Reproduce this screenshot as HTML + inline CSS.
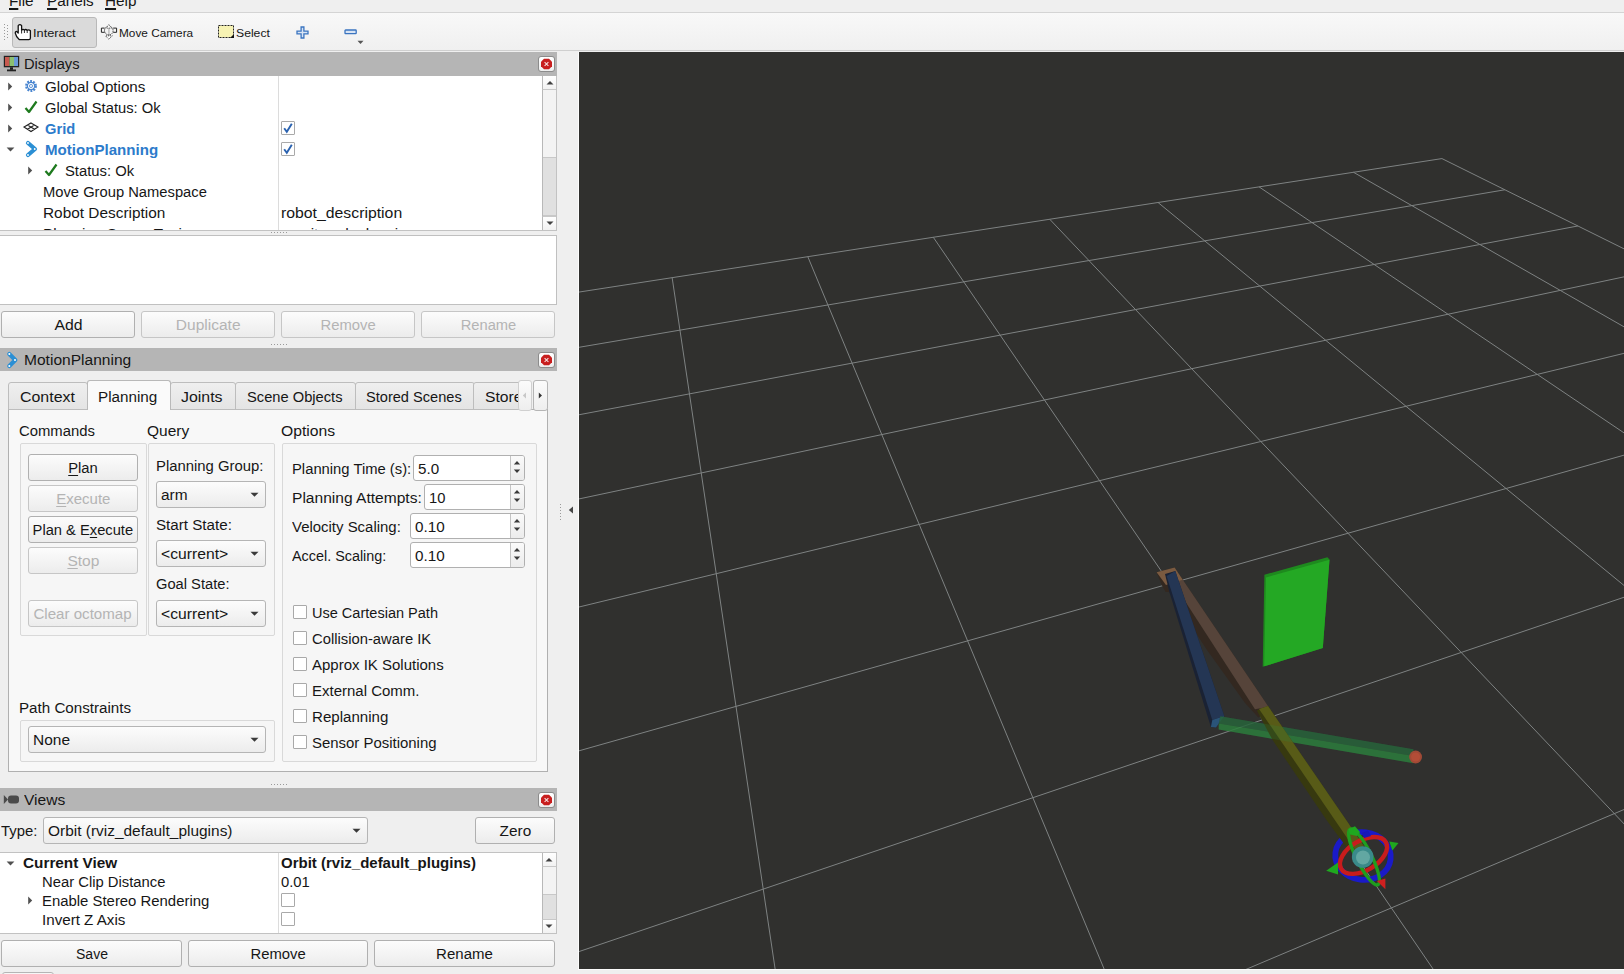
<!DOCTYPE html><html><head><meta charset="utf-8"><style>
html,body{margin:0;padding:0;}
body{width:1624px;height:974px;overflow:hidden;position:relative;background:#efefef;font-family:"Liberation Sans",sans-serif;}
.t{position:absolute;white-space:nowrap;transform-origin:0 0;}
.tc{position:absolute;white-space:nowrap;text-align:center;}
.r{position:absolute;}
svg{position:absolute;overflow:visible;}
.clip{position:absolute;overflow:hidden;}
</style></head><body>
<div class="r" style="left:0px;top:0px;width:1624px;height:12px;background:#efefef;"></div>
<div class="r" style="left:0px;top:12px;width:1624px;height:1px;background:#d4d4d4;"></div>
<div class="t" style="left:8.50px;top:-5.55px;font-size:14.0px;line-height:14.0px;font-weight:400;color:#161616;transform:scaleX(1.09);"><span style="text-decoration:underline;text-decoration-thickness:2px;text-underline-offset:2px">F</span>ile</div>
<div class="t" style="left:46.70px;top:-5.55px;font-size:14.0px;line-height:14.0px;font-weight:400;color:#161616;transform:scaleX(1.09);"><span style="text-decoration:underline;text-decoration-thickness:2px;text-underline-offset:2px">P</span>anels</div>
<div class="t" style="left:104.60px;top:-5.55px;font-size:14.0px;line-height:14.0px;font-weight:400;color:#161616;transform:scaleX(1.09);"><span style="text-decoration:underline;text-decoration-thickness:2px;text-underline-offset:2px">H</span>elp</div>
<div class="r" style="left:0px;top:13px;width:1624px;height:37px;background:linear-gradient(#f8f8f8,#f0f0f0);"></div>
<div class="r" style="left:0px;top:50px;width:1624px;height:1px;background:#cfcfcf;"></div>
<div class="r" style="left:4px;top:24px;width:1px;height:1px;background:#9a9a9a;"></div>
<div class="r" style="left:4px;top:27px;width:1px;height:1px;background:#9a9a9a;"></div>
<div class="r" style="left:4px;top:30px;width:1px;height:1px;background:#9a9a9a;"></div>
<div class="r" style="left:4px;top:33px;width:1px;height:1px;background:#9a9a9a;"></div>
<div class="r" style="left:4px;top:36px;width:1px;height:1px;background:#9a9a9a;"></div>
<div class="r" style="left:4px;top:39px;width:1px;height:1px;background:#9a9a9a;"></div>
<div class="r" style="left:7px;top:25px;width:1px;height:1px;background:#9a9a9a;"></div>
<div class="r" style="left:7px;top:28px;width:1px;height:1px;background:#9a9a9a;"></div>
<div class="r" style="left:7px;top:31px;width:1px;height:1px;background:#9a9a9a;"></div>
<div class="r" style="left:7px;top:34px;width:1px;height:1px;background:#9a9a9a;"></div>
<div class="r" style="left:7px;top:37px;width:1px;height:1px;background:#9a9a9a;"></div>
<div class="r" style="left:12px;top:17px;width:85px;height:31px;border:1px solid #b9b9b9;border-radius:3px;background:#dadada;box-sizing:border-box;"></div>
<svg style="left:14px;top:23px;" width="18" height="18" viewBox="0 0 18 18"><path d="M4.2 10 L4.2 2.6 Q5.9 0.6 7.6 2.6 L7.6 7.2 Q9 5.6 10.4 7 Q11.8 5.8 13.2 7.3 Q14.9 6.2 16.4 7.8 L16.4 15 Q16.4 16.6 14.8 16.6 L5.2 16.6 Q2 13.8 1.3 10.2 Q1.2 8.4 2.6 8.4 Z" fill="#fff" stroke="#111" stroke-width="1.3" stroke-linejoin="round"/><path d="M7.6 7.2 L7.6 10.5 M10.4 7 L10.4 10 M13.2 7.3 L13.2 10" stroke="#111" stroke-width="0.9"/></svg>
<div class="t" style="left:32.90px;top:27.96px;font-size:10.8px;line-height:10.8px;font-weight:400;color:#161616;transform:scaleX(1.1828);">Interact</div>
<svg style="left:98px;top:20px;" width="24" height="24" viewBox="0 0 24 24"><rect x="10" y="8" width="1.8" height="8" fill="#c8c8c8"/><path d="M3.4 8.1 L6.6 8.1 M3.4 12.3 L6.6 12.3 M3.4 8.1 L3.4 12.3 M15.2 8.1 L18.6 8.1 M15.2 12.3 L18.6 12.3 M18.6 8.1 L18.6 12.3" stroke="#222" stroke-width="1"/><circle cx="10.8" cy="10.6" r="4.3" fill="none" stroke="#333" stroke-width="1" stroke-dasharray="1.3,0.9"/><path d="M10.8 4.7 L13.8 8.1 L7.9 8.1 Z M10.8 19.2 L14.3 15.8 L7.4 15.8 Z" fill="#fff" stroke="#444" stroke-width="0.9" stroke-dasharray="1.2,0.8"/></svg>
<div class="t" style="left:118.50px;top:27.96px;font-size:10.8px;line-height:10.8px;font-weight:400;color:#161616;transform:scaleX(1.0942);">Move Camera</div>
<svg style="left:217px;top:24px;" width="18" height="15" viewBox="0 0 18 15"><rect x="1.5" y="1.5" width="15" height="12" fill="#f7f3b4" stroke="#222" stroke-width="1" stroke-dasharray="2,1"/><path d="M17 10 L17 14 L13 14Z" fill="#111"/></svg>
<div class="t" style="left:235.50px;top:27.96px;font-size:10.8px;line-height:10.8px;font-weight:400;color:#161616;transform:scaleX(1.1294);">Select</div>
<svg style="left:295.5px;top:25.5px;" width="13" height="13" viewBox="0 0 13 13"><path d="M5.1 1 L7.9 1 L7.9 5.1 L12 5.1 L12 7.9 L7.9 7.9 L7.9 12 L5.1 12 L5.1 7.9 L1 7.9 L1 5.1 L5.1 5.1 Z" fill="#d8e4f4" stroke="#3a74c0" stroke-width="1.3"/></svg>
<svg style="left:343.5px;top:29px;" width="14" height="7" viewBox="0 0 14 7"><rect x="1" y="1" width="11.2" height="3.6" rx="0.6" fill="#d8e4f4" stroke="#3a74c0" stroke-width="1.3"/></svg>
<svg style="left:357px;top:40px;" width="8" height="5" viewBox="0 0 8 5"><path d="M0.5 0.8 L6.5 0.8 L3.5 4Z" fill="#555"/></svg>
<div class="r" style="left:0px;top:52px;width:557px;height:24px;background:#b5b5b5;"></div>
<div class="t" style="left:24.30px;top:57.25px;font-size:14.0px;line-height:14.0px;font-weight:400;color:#161616;transform:scaleX(1.049);">Displays</div>
<svg style="left:3px;top:55px" width="17" height="18" viewBox="0 0 17 18"><rect x="0.8" y="0.8" width="15.4" height="11.5" fill="#222" /><rect x="2" y="2" width="4.5" height="9" fill="#c85a50"/><rect x="6.5" y="2" width="4.5" height="9" fill="#8cc070"/><rect x="11" y="2" width="4" height="9" fill="#6a9ad8"/><rect x="7" y="12.3" width="3" height="2.5" fill="#222"/><rect x="4" y="14.5" width="9" height="1.8" fill="#222"/></svg>
<div class="r" style="left:538px;top:55.5px;width:17px;height:16.0px;border:1px solid #8c8c8c;border-radius:3px;background:linear-gradient(#ffffff,#eeeeee);box-sizing:border-box;"></div>
<svg style="left:540px;top:57.5px;" width="13" height="12" viewBox="0 0 13 12"><polygon points="4,0.8 9,0.8 12,3.8 12,8.2 9,11.2 4,11.2 1,8.2 1,3.8" fill="#c81e1e"/><path d="M4.6 4.1 L8.4 7.9 M8.4 4.1 L4.6 7.9" stroke="#f4dede" stroke-width="1.1"/></svg>
<div class="r" style="left:0px;top:76px;width:557px;height:155px;background:#fff;"></div>
<div class="r" style="left:0px;top:230px;width:557px;height:1px;background:#c2c2c2;"></div>
<div class="r" style="left:278px;top:76px;width:1px;height:154px;background:#dcdcdc;"></div>
<div class="r" style="left:542px;top:76px;width:15px;height:154px;border-left:1px solid #b8b8b8;background:#f3f3f3;box-sizing:border-box;"></div>
<div class="r" style="left:542px;top:76px;width:15px;height:14px;border-left:1px solid #b8b8b8;border-bottom:1px solid #c8c8c8;background:linear-gradient(#ffffff,#f2f2f2);box-sizing:border-box;"></div>
<svg style="left:545.5px;top:80px;" width="8" height="6" viewBox="0 0 8 6"><path d="M0.5 4.5 L7.5 4.5 L4 1Z" fill="#404040"/></svg>
<div class="r" style="left:542px;top:216px;width:15px;height:14px;border-left:1px solid #b8b8b8;border-top:1px solid #c8c8c8;background:linear-gradient(#ffffff,#f2f2f2);box-sizing:border-box;"></div>
<svg style="left:545.5px;top:220px;" width="8" height="6" viewBox="0 0 8 6"><path d="M0.5 1.5 L7.5 1.5 L4 5Z" fill="#404040"/></svg>
<div class="r" style="left:543px;top:157px;width:14px;height:59px;background:#e0e0e0;border-top:1px solid #c8c8c8;border-bottom:1px solid #c8c8c8;box-sizing:border-box;"></div>
<div class="r" style="left:556px;top:76px;width:1px;height:155px;background:#c2c2c2;"></div>
<svg style="left:7px;top:81.8px;" width="7" height="9" viewBox="0 0 7 9"><path d="M1.2 0.6 L5.2 4.5 L1.2 8.4Z" fill="#505050"/></svg>
<svg style="left:24px;top:79px;" width="14" height="14" viewBox="0 0 14 14"><g transform="translate(7,7)"><circle r="4.6" fill="none" stroke="#4a86d0" stroke-width="2.6" stroke-dasharray="1.8,1.1"/><circle r="3.6" fill="none" stroke="#4a86d0" stroke-width="1.2"/><circle r="1.6" fill="#e8f0fa" stroke="#4a86d0" stroke-width="0.8"/></g></svg>
<div class="t" style="left:44.90px;top:79.85px;font-size:14.0px;line-height:14.0px;font-weight:400;color:#161616;transform:scaleX(1.0841);">Global Options</div>
<svg style="left:7px;top:102.85px;" width="7" height="9" viewBox="0 0 7 9"><path d="M1.2 0.6 L5.2 4.5 L1.2 8.4Z" fill="#505050"/></svg>
<svg style="left:24px;top:100px;" width="14" height="14" viewBox="0 0 14 14"><path d="M1.5 8 L5 12 L12.5 1.5" fill="none" stroke="#1e7a1e" stroke-width="2.2" stroke-linejoin="round"/></svg>
<div class="t" style="left:44.90px;top:100.90px;font-size:14.0px;line-height:14.0px;font-weight:400;color:#161616;transform:scaleX(1.0536);">Global Status: Ok</div>
<svg style="left:7px;top:123.9px;" width="7" height="9" viewBox="0 0 7 9"><path d="M1.2 0.6 L5.2 4.5 L1.2 8.4Z" fill="#505050"/></svg>
<svg style="left:23px;top:122px;" width="16" height="11" viewBox="0 0 16 11"><path d="M8 1 L15 5 L8 9.5 L1 5Z M4.5 3 L11.5 7.3 M11.5 3 L4.5 7.3" fill="none" stroke="#222" stroke-width="1.1"/></svg>
<div class="t" style="left:44.90px;top:121.95px;font-size:14.0px;line-height:14.0px;font-weight:700;color:#2c7bcb;transform:scaleX(1.0493);">Grid</div>
<div class="r" style="left:281px;top:121px;width:14px;height:14px;border:1px solid #a9a9a9;border-radius:1px;background:#fff;box-sizing:border-box;"></div>
<svg style="left:281px;top:121px;" width="14" height="14" viewBox="0 0 14 14"><path d="M3.2 7.2 L5.8 10.8 L10.8 2.8" fill="none" stroke="#2a62b0" stroke-width="1.9"/></svg>
<svg style="left:5.5px;top:146.45px;" width="9" height="7" viewBox="0 0 9 7"><path d="M0.6 1.6 L8.4 1.6 L4.5 5.4Z" fill="#505050"/></svg>
<svg style="left:20px;top:138px;" width="20" height="20" viewBox="0 0 20 20"><path d="M8 5 L15 11 L8 17" fill="none" stroke="#2b8fd4" stroke-width="4.2" stroke-linecap="round" stroke-linejoin="round"/><circle cx="8" cy="5" r="0.9" fill="#fff"/><circle cx="14.7" cy="11" r="0.9" fill="#fff"/><circle cx="8" cy="17" r="0.9" fill="#fff"/></svg>
<div class="t" style="left:44.90px;top:143.00px;font-size:14.0px;line-height:14.0px;font-weight:700;color:#2c7bcb;transform:scaleX(1.0773);">MotionPlanning</div>
<div class="r" style="left:281px;top:142px;width:14px;height:14px;border:1px solid #a9a9a9;border-radius:1px;background:#fff;box-sizing:border-box;"></div>
<svg style="left:281px;top:142px;" width="14" height="14" viewBox="0 0 14 14"><path d="M3.2 7.2 L5.8 10.8 L10.8 2.8" fill="none" stroke="#2a62b0" stroke-width="1.9"/></svg>
<svg style="left:27px;top:166.0px;" width="7" height="9" viewBox="0 0 7 9"><path d="M1.2 0.6 L5.2 4.5 L1.2 8.4Z" fill="#505050"/></svg>
<svg style="left:44px;top:163px;" width="14" height="14" viewBox="0 0 14 14"><path d="M1.5 8 L5 12 L12.5 1.5" fill="none" stroke="#1e7a1e" stroke-width="2.2" stroke-linejoin="round"/></svg>
<div class="t" style="left:64.50px;top:164.05px;font-size:14.0px;line-height:14.0px;font-weight:400;color:#161616;transform:scaleX(1.0572);">Status: Ok</div>
<div class="t" style="left:42.70px;top:185.10px;font-size:14.0px;line-height:14.0px;font-weight:400;color:#161616;transform:scaleX(1.0531);">Move Group Namespace</div>
<div class="t" style="left:42.70px;top:206.15px;font-size:14.0px;line-height:14.0px;font-weight:400;color:#161616;transform:scaleX(1.099);">Robot Description</div>
<div class="t" style="left:280.50px;top:206.15px;font-size:14.0px;line-height:14.0px;font-weight:400;color:#161616;transform:scaleX(1.1284);">robot_description</div>
<div class="clip" style="left:0;top:225px;width:540px;height:5px;">
<div class="t" style="left:42.70px;top:2.20px;font-size:14.0px;line-height:14.0px;font-weight:400;color:#161616;transform:scaleX(1.09);">Planning Scene Topic</div>
<div class="t" style="left:280.50px;top:2.20px;font-size:14.0px;line-height:14.0px;font-weight:400;color:#161616;transform:scaleX(1.09);">monitored_planning_scene</div>
</div>
<div class="r" style="left:271px;top:232px;width:1px;height:1px;background:#9a9a9a;"></div>
<div class="r" style="left:274px;top:232px;width:1px;height:1px;background:#9a9a9a;"></div>
<div class="r" style="left:277px;top:232px;width:1px;height:1px;background:#9a9a9a;"></div>
<div class="r" style="left:280px;top:232px;width:1px;height:1px;background:#9a9a9a;"></div>
<div class="r" style="left:283px;top:232px;width:1px;height:1px;background:#9a9a9a;"></div>
<div class="r" style="left:286px;top:232px;width:1px;height:1px;background:#9a9a9a;"></div>
<div class="r" style="left:0px;top:235px;width:557px;height:70px;background:#fff;border:1px solid #c0c0c0;border-left:none;box-sizing:border-box;"></div>
<div class="r" style="left:1px;top:311px;width:134px;height:27px;border:1px solid #b0b0b0;border-radius:3px;background:linear-gradient(#fcfcfc,#ececec);box-sizing:border-box;"></div>
<div class="tc" style="left:1px;width:134px;top:318.15px;font-size:14.0px;line-height:14.0px;color:#161616;"><span style="display:inline-block;transform:scaleX(1.1275)">Add</span></div>
<div class="r" style="left:141px;top:311px;width:134px;height:27px;border:1px solid #c6c6c6;border-radius:3px;background:linear-gradient(#fcfcfc,#ececec);box-sizing:border-box;"></div>
<div class="tc" style="left:141px;width:134px;top:318.15px;font-size:14.0px;line-height:14.0px;color:#b4b4b4;"><span style="display:inline-block;transform:scaleX(1.1084)">Duplicate</span></div>
<div class="r" style="left:281px;top:311px;width:134px;height:27px;border:1px solid #c6c6c6;border-radius:3px;background:linear-gradient(#fcfcfc,#ececec);box-sizing:border-box;"></div>
<div class="tc" style="left:281px;width:134px;top:318.15px;font-size:14.0px;line-height:14.0px;color:#b4b4b4;"><span style="display:inline-block;transform:scaleX(1.0587)">Remove</span></div>
<div class="r" style="left:421px;top:311px;width:134px;height:27px;border:1px solid #c6c6c6;border-radius:3px;background:linear-gradient(#fcfcfc,#ececec);box-sizing:border-box;"></div>
<div class="tc" style="left:421px;width:134px;top:318.15px;font-size:14.0px;line-height:14.0px;color:#b4b4b4;"><span style="display:inline-block;transform:scaleX(1.0506)">Rename</span></div>
<div class="r" style="left:271px;top:344px;width:1px;height:1px;background:#9a9a9a;"></div>
<div class="r" style="left:274px;top:344px;width:1px;height:1px;background:#9a9a9a;"></div>
<div class="r" style="left:277px;top:344px;width:1px;height:1px;background:#9a9a9a;"></div>
<div class="r" style="left:280px;top:344px;width:1px;height:1px;background:#9a9a9a;"></div>
<div class="r" style="left:283px;top:344px;width:1px;height:1px;background:#9a9a9a;"></div>
<div class="r" style="left:286px;top:344px;width:1px;height:1px;background:#9a9a9a;"></div>
<div class="r" style="left:0px;top:348px;width:557px;height:23px;background:#b5b5b5;"></div>
<div class="t" style="left:24.30px;top:352.95px;font-size:14.0px;line-height:14.0px;font-weight:400;color:#161616;transform:scaleX(1.1107);">MotionPlanning</div>
<svg style="left:0px;top:340px" width="30" height="35" viewBox="0 340 30 35"><path d="M9.3 354 L15.3 360 L9.3 366" fill="none" stroke="#2b8fd4" stroke-width="4.2" stroke-linecap="round" stroke-linejoin="round"/><circle cx="9.3" cy="354" r="1" fill="#fff"/><circle cx="15" cy="360" r="1" fill="#fff"/><circle cx="9.3" cy="366" r="1" fill="#fff"/></svg>
<div class="r" style="left:538px;top:351.5px;width:17px;height:16.0px;border:1px solid #8c8c8c;border-radius:3px;background:linear-gradient(#ffffff,#eeeeee);box-sizing:border-box;"></div>
<svg style="left:540px;top:353.5px;" width="13" height="12" viewBox="0 0 13 12"><polygon points="4,0.8 9,0.8 12,3.8 12,8.2 9,11.2 4,11.2 1,8.2 1,3.8" fill="#c81e1e"/><path d="M4.6 4.1 L8.4 7.9 M8.4 4.1 L4.6 7.9" stroke="#f4dede" stroke-width="1.1"/></svg>
<div class="r" style="left:8px;top:409px;width:540px;height:363px;background:#f8f8f8;border:1px solid #b0b0b0;border-radius:0;box-sizing:border-box;"></div>
<div class="r" style="left:8px;top:382px;width:80px;height:28px;background:linear-gradient(#efefef,#e4e4e4);border:1px solid #bdbdbd;border-radius:3px 3px 0 0;box-sizing:border-box;"></div>
<div class="t" style="left:19.80px;top:390.15px;font-size:14.0px;line-height:14.0px;font-weight:400;color:#161616;transform:scaleX(1.1378);">Context</div>
<div class="r" style="left:170px;top:382px;width:66px;height:28px;background:linear-gradient(#efefef,#e4e4e4);border:1px solid #bdbdbd;border-radius:3px 3px 0 0;box-sizing:border-box;"></div>
<div class="t" style="left:181.40px;top:390.15px;font-size:14.0px;line-height:14.0px;font-weight:400;color:#161616;transform:scaleX(1.1346);">Joints</div>
<div class="r" style="left:235px;top:382px;width:121px;height:28px;background:linear-gradient(#efefef,#e4e4e4);border:1px solid #bdbdbd;border-radius:3px 3px 0 0;box-sizing:border-box;"></div>
<div class="t" style="left:246.50px;top:390.15px;font-size:14.0px;line-height:14.0px;font-weight:400;color:#161616;transform:scaleX(1.0487);">Scene Objects</div>
<div class="r" style="left:355px;top:382px;width:120px;height:28px;background:linear-gradient(#efefef,#e4e4e4);border:1px solid #bdbdbd;border-radius:3px 3px 0 0;box-sizing:border-box;"></div>
<div class="t" style="left:365.50px;top:390.15px;font-size:14.0px;line-height:14.0px;font-weight:400;color:#161616;transform:scaleX(1.042);">Stored Scenes</div>
<div class="clip" style="left:473px;top:380px;width:46px;height:30px;">
<div class="r" style="left:0px;top:2px;width:60px;height:28px;background:linear-gradient(#efefef,#e4e4e4);border:1px solid #bdbdbd;border-radius:3px 3px 0 0;box-sizing:border-box;"></div>
<div class="t" style="left:11.70px;top:10.15px;font-size:14.0px;line-height:14.0px;font-weight:400;color:#161616;transform:scaleX(1.12);">Stored States</div>
</div>
<div class="r" style="left:87px;top:380px;width:84px;height:30px;background:#fafafa;border:1px solid #b9b9b9;border-bottom:none;border-radius:3px 3px 0 0;box-sizing:border-box;"></div>
<div class="t" style="left:98.40px;top:389.55px;font-size:14.0px;line-height:14.0px;font-weight:400;color:#161616;transform:scaleX(1.0881);">Planning</div>
<div class="r" style="left:518px;top:380px;width:14px;height:31px;border:1px solid #d0d0d0;border-radius:3px;background:linear-gradient(#fbfbfb,#eeeeee);box-sizing:border-box;"></div>
<svg style="left:522px;top:392px;" width="5" height="7" viewBox="0 0 5 7"><path d="M4 0.5 L0.8 3.5 L4 6.5Z" fill="#c8c8c8"/></svg>
<div class="r" style="left:533px;top:380px;width:15px;height:31px;border:1px solid #b5b5b5;border-radius:3px;background:linear-gradient(#fbfbfb,#eeeeee);box-sizing:border-box;"></div>
<svg style="left:538px;top:392px;" width="5" height="7" viewBox="0 0 5 7"><path d="M0.8 0.5 L4 3.5 L0.8 6.5Z" fill="#333"/></svg>
<div class="t" style="left:18.70px;top:424.05px;font-size:14.0px;line-height:14.0px;font-weight:400;color:#161616;transform:scaleX(1.0601);">Commands</div>
<div class="t" style="left:146.90px;top:424.05px;font-size:14.0px;line-height:14.0px;font-weight:400;color:#161616;transform:scaleX(1.1069);">Query</div>
<div class="t" style="left:281.00px;top:424.25px;font-size:14.0px;line-height:14.0px;font-weight:400;color:#161616;transform:scaleX(1.1212);">Options</div>
<div class="r" style="left:20px;top:443px;width:127px;height:193px;border:1px solid #d9d9d9;border-radius:2px;background:#f6f6f6;box-sizing:border-box;"></div>
<div class="r" style="left:148px;top:443px;width:127px;height:193px;border:1px solid #d9d9d9;border-radius:2px;background:#f6f6f6;box-sizing:border-box;"></div>
<div class="r" style="left:282px;top:443px;width:255px;height:319px;border:1px solid #d9d9d9;border-radius:2px;background:#f6f6f6;box-sizing:border-box;"></div>
<div class="r" style="left:28px;top:454px;width:110px;height:27px;border:1px solid #b0b0b0;border-radius:3px;background:linear-gradient(#fcfcfc,#ececec);box-sizing:border-box;"></div>
<div class="tc" style="left:28px;width:110px;top:461.15px;font-size:14.0px;line-height:14.0px;color:#161616;"><span style="display:inline-block;transform:scaleX(1.056)"><span style="text-decoration:underline;text-decoration-thickness:1px;text-underline-offset:2px">P</span>lan</span></div>
<div class="r" style="left:28px;top:485px;width:110px;height:27px;border:1px solid #c6c6c6;border-radius:3px;background:linear-gradient(#fcfcfc,#ececec);box-sizing:border-box;"></div>
<div class="tc" style="left:28px;width:110px;top:492.35px;font-size:14.0px;line-height:14.0px;color:#b4b4b4;"><span style="display:inline-block;transform:scaleX(1.0713)"><span style="text-decoration:underline;text-decoration-thickness:1px;text-underline-offset:2px">E</span>xecute</span></div>
<div class="r" style="left:28px;top:516px;width:110px;height:27px;border:1px solid #b0b0b0;border-radius:3px;background:linear-gradient(#fcfcfc,#ececec);box-sizing:border-box;"></div>
<div class="tc" style="left:28px;width:110px;top:523.15px;font-size:14.0px;line-height:14.0px;color:#161616;"><span style="display:inline-block;transform:scaleX(1.0498)">Plan &amp; E<span style="text-decoration:underline;text-decoration-thickness:1px;text-underline-offset:2px">x</span>ecute</span></div>
<div class="r" style="left:28px;top:547px;width:110px;height:27px;border:1px solid #c6c6c6;border-radius:3px;background:linear-gradient(#fcfcfc,#ececec);box-sizing:border-box;"></div>
<div class="tc" style="left:28px;width:110px;top:554.05px;font-size:14.0px;line-height:14.0px;color:#b4b4b4;"><span style="display:inline-block;transform:scaleX(1.1106)"><span style="text-decoration:underline;text-decoration-thickness:1px;text-underline-offset:2px">S</span>top</span></div>
<div class="r" style="left:28px;top:600px;width:110px;height:27px;border:1px solid #c6c6c6;border-radius:3px;background:linear-gradient(#fcfcfc,#ececec);box-sizing:border-box;"></div>
<div class="tc" style="left:28px;width:110px;top:607.05px;font-size:14.0px;line-height:14.0px;color:#b4b4b4;"><span style="display:inline-block;transform:scaleX(1.0786)">Clear octomap</span></div>
<div class="t" style="left:155.70px;top:458.75px;font-size:14.0px;line-height:14.0px;font-weight:400;color:#161616;transform:scaleX(1.0624);">Planning Group:</div>
<div class="r" style="left:156px;top:481px;width:110px;height:27px;border:1px solid #b5b5b5;border-radius:3px;background:linear-gradient(#fcfcfc,#ececec);box-sizing:border-box;"></div>
<div class="t" style="left:160.60px;top:488.25px;font-size:14.0px;line-height:14.0px;font-weight:400;color:#161616;transform:scaleX(1.1026);">arm</div>
<svg style="left:250px;top:491.5px;" width="9" height="6" viewBox="0 0 9 6"><path d="M0.5 0.8 L8.5 0.8 L4.5 4.8Z" fill="#3a3a3a"/></svg>
<div class="t" style="left:155.70px;top:517.85px;font-size:14.0px;line-height:14.0px;font-weight:400;color:#161616;transform:scaleX(1.0836);">Start State:</div>
<div class="r" style="left:156px;top:540px;width:110px;height:27px;border:1px solid #b5b5b5;border-radius:3px;background:linear-gradient(#fcfcfc,#ececec);box-sizing:border-box;"></div>
<div class="t" style="left:160.60px;top:547.35px;font-size:14.0px;line-height:14.0px;font-weight:400;color:#161616;transform:scaleX(1.1212);">&lt;current&gt;</div>
<svg style="left:250px;top:550.5px;" width="9" height="6" viewBox="0 0 9 6"><path d="M0.5 0.8 L8.5 0.8 L4.5 4.8Z" fill="#3a3a3a"/></svg>
<div class="t" style="left:155.70px;top:577.35px;font-size:14.0px;line-height:14.0px;font-weight:400;color:#161616;transform:scaleX(1.0493);">Goal State:</div>
<div class="r" style="left:156px;top:600px;width:110px;height:27px;border:1px solid #b5b5b5;border-radius:3px;background:linear-gradient(#fcfcfc,#ececec);box-sizing:border-box;"></div>
<div class="t" style="left:160.60px;top:607.05px;font-size:14.0px;line-height:14.0px;font-weight:400;color:#161616;transform:scaleX(1.1212);">&lt;current&gt;</div>
<svg style="left:250px;top:610.5px;" width="9" height="6" viewBox="0 0 9 6"><path d="M0.5 0.8 L8.5 0.8 L4.5 4.8Z" fill="#3a3a3a"/></svg>
<div class="t" style="left:292.40px;top:462.35px;font-size:14.0px;line-height:14.0px;font-weight:400;color:#161616;transform:scaleX(1.0565);">Planning Time (s):</div>
<div class="r" style="left:413px;top:455px;width:112px;height:26px;border:1px solid #b0b0b0;border-radius:3px;background:#fff;box-sizing:border-box;"></div>
<div class="r" style="left:510px;top:456px;width:14px;height:24px;border-left:1px solid #c4c4c4;background:linear-gradient(#fafafa,#ececec);box-sizing:border-box;border-radius:0 2px 2px 0;"></div>
<div class="t" style="left:417.60px;top:462.35px;font-size:14.0px;line-height:14.0px;font-weight:400;color:#161616;transform:scaleX(1.0838);">5.0</div>
<svg style="left:513px;top:460px;" width="8" height="15" viewBox="0 0 8 15"><path d="M0.8 4.5 L4 1 L7.2 4.5Z M0.8 9.5 L7.2 9.5 L4 13Z" fill="#3a3a3a"/></svg>
<div class="t" style="left:292.40px;top:491.15px;font-size:14.0px;line-height:14.0px;font-weight:400;color:#161616;transform:scaleX(1.1118);">Planning Attempts:</div>
<div class="r" style="left:424px;top:484px;width:101px;height:26px;border:1px solid #b0b0b0;border-radius:3px;background:#fff;box-sizing:border-box;"></div>
<div class="r" style="left:510px;top:485px;width:14px;height:24px;border-left:1px solid #c4c4c4;background:linear-gradient(#fafafa,#ececec);box-sizing:border-box;border-radius:0 2px 2px 0;"></div>
<div class="t" style="left:429.40px;top:491.15px;font-size:14.0px;line-height:14.0px;font-weight:400;color:#161616;transform:scaleX(1.0528);">10</div>
<svg style="left:513px;top:489px;" width="8" height="15" viewBox="0 0 8 15"><path d="M0.8 4.5 L4 1 L7.2 4.5Z M0.8 9.5 L7.2 9.5 L4 13Z" fill="#3a3a3a"/></svg>
<div class="t" style="left:292.40px;top:520.15px;font-size:14.0px;line-height:14.0px;font-weight:400;color:#161616;transform:scaleX(1.0672);">Velocity Scaling:</div>
<div class="r" style="left:410px;top:513px;width:115px;height:26px;border:1px solid #b0b0b0;border-radius:3px;background:#fff;box-sizing:border-box;"></div>
<div class="r" style="left:510px;top:514px;width:14px;height:24px;border-left:1px solid #c4c4c4;background:linear-gradient(#fafafa,#ececec);box-sizing:border-box;border-radius:0 2px 2px 0;"></div>
<div class="t" style="left:414.50px;top:520.15px;font-size:14.0px;line-height:14.0px;font-weight:400;color:#161616;transform:scaleX(1.0899);">0.10</div>
<svg style="left:513px;top:518px;" width="8" height="15" viewBox="0 0 8 15"><path d="M0.8 4.5 L4 1 L7.2 4.5Z M0.8 9.5 L7.2 9.5 L4 13Z" fill="#3a3a3a"/></svg>
<div class="t" style="left:292.40px;top:549.15px;font-size:14.0px;line-height:14.0px;font-weight:400;color:#161616;transform:scaleX(1.0269);">Accel. Scaling:</div>
<div class="r" style="left:410px;top:542px;width:115px;height:26px;border:1px solid #b0b0b0;border-radius:3px;background:#fff;box-sizing:border-box;"></div>
<div class="r" style="left:510px;top:543px;width:14px;height:24px;border-left:1px solid #c4c4c4;background:linear-gradient(#fafafa,#ececec);box-sizing:border-box;border-radius:0 2px 2px 0;"></div>
<div class="t" style="left:414.50px;top:549.15px;font-size:14.0px;line-height:14.0px;font-weight:400;color:#161616;transform:scaleX(1.0899);">0.10</div>
<svg style="left:513px;top:547px;" width="8" height="15" viewBox="0 0 8 15"><path d="M0.8 4.5 L4 1 L7.2 4.5Z M0.8 9.5 L7.2 9.5 L4 13Z" fill="#3a3a3a"/></svg>
<div class="r" style="left:293px;top:605.3px;width:14px;height:14.0px;border:1px solid #a9a9a9;border-radius:1px;background:#fff;box-sizing:border-box;"></div>
<div class="t" style="left:311.80px;top:606.35px;font-size:14.0px;line-height:14.0px;font-weight:400;color:#161616;transform:scaleX(1.0378);">Use Cartesian Path</div>
<div class="r" style="left:293px;top:631.3199999999999px;width:14px;height:14.0px;border:1px solid #a9a9a9;border-radius:1px;background:#fff;box-sizing:border-box;"></div>
<div class="t" style="left:311.80px;top:632.37px;font-size:14.0px;line-height:14.0px;font-weight:400;color:#161616;transform:scaleX(1.0565);">Collision-aware IK</div>
<div class="r" style="left:293px;top:657.3399999999999px;width:14px;height:14.0px;border:1px solid #a9a9a9;border-radius:1px;background:#fff;box-sizing:border-box;"></div>
<div class="t" style="left:311.80px;top:658.39px;font-size:14.0px;line-height:14.0px;font-weight:400;color:#161616;transform:scaleX(1.071);">Approx IK Solutions</div>
<div class="r" style="left:293px;top:683.3599999999999px;width:14px;height:14.0px;border:1px solid #a9a9a9;border-radius:1px;background:#fff;box-sizing:border-box;"></div>
<div class="t" style="left:311.80px;top:684.41px;font-size:14.0px;line-height:14.0px;font-weight:400;color:#161616;transform:scaleX(1.0702);">External Comm.</div>
<div class="r" style="left:293px;top:709.38px;width:14px;height:14.0px;border:1px solid #a9a9a9;border-radius:1px;background:#fff;box-sizing:border-box;"></div>
<div class="t" style="left:311.80px;top:710.43px;font-size:14.0px;line-height:14.0px;font-weight:400;color:#161616;transform:scaleX(1.077);">Replanning</div>
<div class="r" style="left:293px;top:735.4px;width:14px;height:14.0px;border:1px solid #a9a9a9;border-radius:1px;background:#fff;box-sizing:border-box;"></div>
<div class="t" style="left:311.80px;top:736.45px;font-size:14.0px;line-height:14.0px;font-weight:400;color:#161616;transform:scaleX(1.0664);">Sensor Positioning</div>
<div class="t" style="left:18.90px;top:700.65px;font-size:14.0px;line-height:14.0px;font-weight:400;color:#161616;transform:scaleX(1.0831);">Path Constraints</div>
<div class="r" style="left:20px;top:720px;width:255px;height:42px;border:1px solid #d9d9d9;border-radius:2px;background:#f6f6f6;box-sizing:border-box;"></div>
<div class="r" style="left:28px;top:726px;width:238px;height:27px;border:1px solid #b5b5b5;border-radius:3px;background:linear-gradient(#fcfcfc,#ececec);box-sizing:border-box;"></div>
<div class="t" style="left:32.50px;top:732.55px;font-size:14.0px;line-height:14.0px;font-weight:400;color:#161616;transform:scaleX(1.1055);">None</div>
<svg style="left:250px;top:736.5px;" width="9" height="6" viewBox="0 0 9 6"><path d="M0.5 0.8 L8.5 0.8 L4.5 4.8Z" fill="#3a3a3a"/></svg>
<div class="r" style="left:271px;top:784px;width:1px;height:1px;background:#9a9a9a;"></div>
<div class="r" style="left:274px;top:784px;width:1px;height:1px;background:#9a9a9a;"></div>
<div class="r" style="left:277px;top:784px;width:1px;height:1px;background:#9a9a9a;"></div>
<div class="r" style="left:280px;top:784px;width:1px;height:1px;background:#9a9a9a;"></div>
<div class="r" style="left:283px;top:784px;width:1px;height:1px;background:#9a9a9a;"></div>
<div class="r" style="left:286px;top:784px;width:1px;height:1px;background:#9a9a9a;"></div>
<div class="r" style="left:0px;top:788px;width:557px;height:23px;background:#b5b5b5;"></div>
<div class="t" style="left:24.30px;top:792.95px;font-size:14.0px;line-height:14.0px;font-weight:400;color:#161616;transform:scaleX(1.1134);">Views</div>
<svg style="left:3px;top:794px" width="17" height="11" viewBox="0 0 17 11"><path d="M0.8 1 L5 5.5 L0.8 10Z" fill="#4a4a4a"/><rect x="5" y="1.5" width="11" height="8" rx="3" fill="#4a4a4a"/></svg>
<div class="r" style="left:538px;top:791.5px;width:17px;height:16.0px;border:1px solid #8c8c8c;border-radius:3px;background:linear-gradient(#ffffff,#eeeeee);box-sizing:border-box;"></div>
<svg style="left:540px;top:793.5px;" width="13" height="12" viewBox="0 0 13 12"><polygon points="4,0.8 9,0.8 12,3.8 12,8.2 9,11.2 4,11.2 1,8.2 1,3.8" fill="#c81e1e"/><path d="M4.6 4.1 L8.4 7.9 M8.4 4.1 L4.6 7.9" stroke="#f4dede" stroke-width="1.1"/></svg>
<div class="t" style="left:1.10px;top:823.95px;font-size:14.0px;line-height:14.0px;font-weight:400;color:#161616;transform:scaleX(1.0599);">Type:</div>
<div class="r" style="left:43px;top:817px;width:325px;height:27px;border:1px solid #b5b5b5;border-radius:3px;background:linear-gradient(#fcfcfc,#ececec);box-sizing:border-box;"></div>
<div class="t" style="left:47.50px;top:823.95px;font-size:14.0px;line-height:14.0px;font-weight:400;color:#161616;transform:scaleX(1.1028);">Orbit (rviz_default_plugins)</div>
<svg style="left:352px;top:827.5px;" width="9" height="6" viewBox="0 0 9 6"><path d="M0.5 0.8 L8.5 0.8 L4.5 4.8Z" fill="#3a3a3a"/></svg>
<div class="r" style="left:475px;top:817px;width:80px;height:27px;border:1px solid #b0b0b0;border-radius:3px;background:linear-gradient(#fcfcfc,#ececec);box-sizing:border-box;"></div>
<div class="tc" style="left:475px;width:80px;top:823.95px;font-size:14.0px;line-height:14.0px;color:#161616;"><span style="display:inline-block;transform:scaleX(1.0973)">Zero</span></div>
<div class="r" style="left:0px;top:852px;width:557px;height:82px;background:#fff;border:1px solid #c2c2c2;border-left:none;box-sizing:border-box;"></div>
<div class="r" style="left:278px;top:853px;width:1px;height:80px;background:#dcdcdc;"></div>
<div class="r" style="left:542px;top:853px;width:14px;height:80px;border-left:1px solid #b8b8b8;background:#f3f3f3;box-sizing:border-box;"></div>
<div class="r" style="left:542px;top:853px;width:14px;height:14px;border-left:1px solid #b8b8b8;border-bottom:1px solid #c8c8c8;background:linear-gradient(#ffffff,#f2f2f2);box-sizing:border-box;"></div>
<svg style="left:545.0px;top:857px;" width="8" height="6" viewBox="0 0 8 6"><path d="M0.5 4.5 L7.5 4.5 L4 1Z" fill="#404040"/></svg>
<div class="r" style="left:542px;top:919px;width:14px;height:14px;border-left:1px solid #b8b8b8;border-top:1px solid #c8c8c8;background:linear-gradient(#ffffff,#f2f2f2);box-sizing:border-box;"></div>
<svg style="left:545.0px;top:923px;" width="8" height="6" viewBox="0 0 8 6"><path d="M0.5 1.5 L7.5 1.5 L4 5Z" fill="#404040"/></svg>
<div class="r" style="left:543px;top:893.5px;width:13px;height:26.0px;background:#e0e0e0;border-top:1px solid #c8c8c8;border-bottom:1px solid #c8c8c8;box-sizing:border-box;"></div>
<svg style="left:5.5px;top:859.5px;" width="9" height="7" viewBox="0 0 9 7"><path d="M0.6 1.6 L8.4 1.6 L4.5 5.4Z" fill="#505050"/></svg>
<div class="t" style="left:22.50px;top:856.05px;font-size:14.0px;line-height:14.0px;font-weight:700;color:#161616;transform:scaleX(1.094);">Current View</div>
<div class="t" style="left:280.70px;top:856.05px;font-size:14.0px;line-height:14.0px;font-weight:700;color:#161616;transform:scaleX(1.0708);">Orbit (rviz_default_plugins)</div>
<div class="t" style="left:42.20px;top:875.15px;font-size:14.0px;line-height:14.0px;font-weight:400;color:#161616;transform:scaleX(1.0572);">Near Clip Distance</div>
<div class="t" style="left:280.70px;top:875.15px;font-size:14.0px;line-height:14.0px;font-weight:400;color:#161616;transform:scaleX(1.0569);">0.01</div>
<svg style="left:27px;top:896.2px;" width="7" height="9" viewBox="0 0 7 9"><path d="M1.2 0.6 L5.2 4.5 L1.2 8.4Z" fill="#505050"/></svg>
<div class="t" style="left:42.20px;top:894.25px;font-size:14.0px;line-height:14.0px;font-weight:400;color:#161616;transform:scaleX(1.064);">Enable Stereo Rendering</div>
<div class="r" style="left:281px;top:893px;width:14px;height:14px;border:1px solid #a9a9a9;border-radius:1px;background:#fff;box-sizing:border-box;"></div>
<div class="t" style="left:42.20px;top:913.35px;font-size:14.0px;line-height:14.0px;font-weight:400;color:#161616;transform:scaleX(1.0827);">Invert Z Axis</div>
<div class="r" style="left:281px;top:912px;width:14px;height:14px;border:1px solid #a9a9a9;border-radius:1px;background:#fff;box-sizing:border-box;"></div>
<div class="clip" style="left:0;top:930px;width:540px;height:3px;">
<div class="t" style="left:42.20px;top:2.45px;font-size:14.0px;line-height:14.0px;font-weight:400;color:#161616;transform:scaleX(1.09);">Target Frame</div>
<div class="t" style="left:280.70px;top:2.45px;font-size:14.0px;line-height:14.0px;font-weight:400;color:#161616;transform:scaleX(1.09);">&lt;Fixed Frame&gt;</div>
</div>
<div class="r" style="left:1px;top:940px;width:181px;height:27px;border:1px solid #b0b0b0;border-radius:3px;background:linear-gradient(#fcfcfc,#ececec);box-sizing:border-box;"></div>
<div class="tc" style="left:1px;width:181px;top:947.15px;font-size:14.0px;line-height:14.0px;color:#161616;"><span style="display:inline-block;transform:scaleX(1.0024)">Save</span></div>
<div class="r" style="left:188px;top:940px;width:180px;height:27px;border:1px solid #b0b0b0;border-radius:3px;background:linear-gradient(#fcfcfc,#ececec);box-sizing:border-box;"></div>
<div class="tc" style="left:188px;width:180px;top:947.15px;font-size:14.0px;line-height:14.0px;color:#161616;"><span style="display:inline-block;transform:scaleX(1.0587)">Remove</span></div>
<div class="r" style="left:374px;top:940px;width:181px;height:27px;border:1px solid #b0b0b0;border-radius:3px;background:linear-gradient(#fcfcfc,#ececec);box-sizing:border-box;"></div>
<div class="tc" style="left:374px;width:181px;top:947.15px;font-size:14.0px;line-height:14.0px;color:#161616;"><span style="display:inline-block;transform:scaleX(1.0714)">Rename</span></div>
<div class="r" style="left:2px;top:972px;width:52px;height:18px;border:1px solid #b5b5b5;border-radius:3px;background:#f6f6f6;box-sizing:border-box;"></div>
<div class="r" style="left:560px;top:504px;width:1px;height:1px;background:#9a9a9a;"></div>
<div class="r" style="left:560px;top:507px;width:1px;height:1px;background:#9a9a9a;"></div>
<div class="r" style="left:560px;top:510px;width:1px;height:1px;background:#9a9a9a;"></div>
<div class="r" style="left:560px;top:513px;width:1px;height:1px;background:#9a9a9a;"></div>
<div class="r" style="left:560px;top:516px;width:1px;height:1px;background:#9a9a9a;"></div>
<div class="r" style="left:560px;top:519px;width:1px;height:1px;background:#9a9a9a;"></div>
<svg style="left:568px;top:506px;" width="6" height="9" viewBox="0 0 6 9"><path d="M5 0.5 L0.8 4 L5 7.5Z" fill="#444"/></svg>
<div class="r" style="left:578px;top:52px;width:1px;height:918px;background:#fcfcfc;"></div>
<div class="r" style="left:578px;top:969px;width:1046px;height:1px;background:#fcfcfc;"></div>
<div class="clip" style="left:579px;top:52px;width:1045px;height:917px;background:#30302e;">
<svg style="left:0;top:0;overflow:hidden" width="1045" height="917"><g stroke="#7e8282" stroke-width="1" fill="none"><line x1="862.94" y1="106.58" x2="2747.51" y2="1040.97"/><line x1="862.94" y1="106.58" x2="-388.91" y2="300.24"/><line x1="774.48" y1="120.26" x2="2653.75" y2="1193.98"/><line x1="925.87" y1="137.78" x2="-433.86" y2="369.13"/><line x1="680.05" y1="134.87" x2="2536.11" y2="1385.99"/><line x1="998.86" y1="173.97" x2="-490.16" y2="455.39"/><line x1="579.04" y1="150.50" x2="2384.13" y2="1634.04"/><line x1="1084.53" y1="216.44" x2="-562.69" y2="566.53"/><line x1="470.73" y1="167.25" x2="2180.19" y2="1966.89"/><line x1="1186.50" y1="267.00" x2="-659.68" y2="715.15"/><line x1="354.31" y1="185.27" x2="1892.17" y2="2436.97"/><line x1="1309.91" y1="328.19" x2="-796.01" y2="924.04"/><line x1="228.81" y1="204.68" x2="1454.55" y2="3151.22"/><line x1="1462.32" y1="403.76" x2="-1001.68" y2="1239.20"/><line x1="93.15" y1="225.67" x2="709.90" y2="4366.57"/><line x1="1655.30" y1="499.44" x2="-1347.67" y2="1769.36"/><line x1="-53.96" y1="248.43" x2="-839.48" y2="6895.34"/><line x1="1907.56" y1="624.51" x2="-2051.91" y2="2848.45"/><line x1="-214.05" y1="273.19" x2="-6031.60" y2="15369.47"/><line x1="2251.34" y1="794.96" x2="-4268.02" y2="6244.19"/><line x1="-388.91" y1="300.24" x2="-13727.19" y2="20738.45"/><line x1="2747.51" y1="1040.97" x2="-9322.45" y2="20740.52"/></g>
<polygon points="685.4,522.7 748.4,505.3 750.5,507.6 743.8,596.1 683.7,614.8" fill="#1e8a1e"/><polygon points="687.0,525.4 750.5,507.8 743.8,596.1 685.2,614.3" fill="#24a824"/><polygon points="577.6,520.3 595.6,515.4 603.8,527.7 689.5,654.7 689.5,659.0 679.3,665.5 666.0,651.0 628.0,598.0 590.0,540.0 586.6,540.0 582.5,532.6" fill="#332820"/><polygon points="593.0,529.0 603.8,527.7 689.5,654.7 676.0,657.2" fill="#56443a"/><polygon points="577.6,520.3 595.6,515.4 603.8,527.7 587.0,533.0" fill="#7a5a40"/><polygon points="586.0,522.0 590.1,539.0 631.9,675.0 637.0,675.5 645.3,664.0 596.3,519.0" fill="#1a2234"/><polygon points="587.6,524.0 596.3,519.0 645.3,664.0 633.3,668.0" fill="#243654"/><polygon points="633.3,668.0 645.3,664.0 637.0,675.5 631.9,675.0" fill="#2a5478"/><polygon points="641.3,664.2 834.5,697.3 834.5,704.0 639.7,671.4" fill="#26583a" fill-opacity="0.8"/><polygon points="639.7,671.4 834.5,704.0 834.5,711.3 639.7,677.5" fill="#2c7a3c" fill-opacity="0.8"/><ellipse cx="784" cy="804" rx="27.8" ry="23.8" transform="rotate(7 784 804)" fill="none" stroke="#1a1ac8" stroke-width="5.8"/><polygon points="677.8,658.5 693.6,688.0 747.5,768.0 771.0,800.0 785.0,794.0 689.0,654.0" fill="#37390f"/><polygon points="680.0,657.0 689.0,654.0 785.0,794.0 777.0,799.0" fill="#585b17"/><polygon points="641.3,664.2 834.5,697.3 834.5,711.3 639.7,677.5" fill="#2f8a40" fill-opacity="0.22"/><circle cx="836.5999999999999" cy="705" r="6.4" fill="#a04a36"/><circle cx="836.5999999999999" cy="705" r="4.5" fill="#c05038" fill-opacity="0.6"/><ellipse cx="784.5" cy="803.4" rx="26" ry="14.8" transform="rotate(-31 784.5 803.4)" fill="none" stroke="#c81c1c" stroke-width="4.4"/><ellipse cx="785" cy="805" rx="31" ry="7.5" transform="rotate(63.4 785 805)" fill="none" stroke="#1e9e1e" stroke-width="3.4"/><circle cx="783.7" cy="805" r="10.8" fill="#3a8a8a"/><circle cx="784" cy="805.5" r="7" fill="#6aaca6" fill-opacity="0.85"/><polygon points="747.2,818.8 759.0,810.5 759.0,822.5" fill="#1fa81f"/><polygon points="769.5,777.0 776.0,774.2 781.0,780.0 778.0,784.0 771.0,782.6" fill="#1fa81f"/><polygon points="782.6,781.0 789.0,778.5 792.0,784.0 785.0,786.0" fill="#1818b8"/><polygon points="810.3,789.6 819.5,791.1 813.4,798.5" fill="#1fa81f"/><polygon points="798.0,829.0 806.4,826.5 806.4,837.3" fill="#d02020"/>
</svg></div>
</body></html>
